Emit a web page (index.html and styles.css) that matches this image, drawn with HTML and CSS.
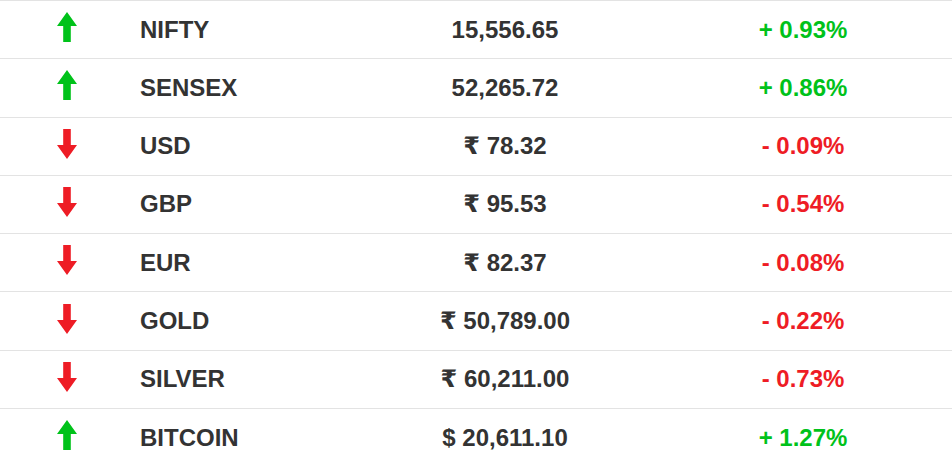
FILE: index.html
```html
<!DOCTYPE html>
<html>
<head>
<meta charset="utf-8">
<link rel="stylesheet" href="styles.css">
</head>
<body>
<div class="ticker">
  <div class="row">
    <div class="dir"><svg class="arrow up" viewBox="0 0 20 30" width="20" height="30"><path d="M10 0 L20 14 L13.8 14 L13.8 30 L6.2 30 L6.2 14 L0 14 Z"/></svg></div>
    <div class="name">NIFTY</div>
    <div class="value">15,556.65</div>
    <div class="change pos">+ 0.93%</div>
  </div>
  <div class="row">
    <div class="dir"><svg class="arrow up" viewBox="0 0 20 30" width="20" height="30"><path d="M10 0 L20 14 L13.8 14 L13.8 30 L6.2 30 L6.2 14 L0 14 Z"/></svg></div>
    <div class="name">SENSEX</div>
    <div class="value">52,265.72</div>
    <div class="change pos">+ 0.86%</div>
  </div>
  <div class="row">
    <div class="dir"><svg class="arrow down" viewBox="0 0 20 30" width="20" height="30"><path d="M10 30 L20 16 L13.8 16 L13.8 0 L6.2 0 L6.2 16 L0 16 Z"/></svg></div>
    <div class="name">USD</div>
    <div class="value">₹ 78.32</div>
    <div class="change neg">- 0.09%</div>
  </div>
  <div class="row">
    <div class="dir"><svg class="arrow down" viewBox="0 0 20 30" width="20" height="30"><path d="M10 30 L20 16 L13.8 16 L13.8 0 L6.2 0 L6.2 16 L0 16 Z"/></svg></div>
    <div class="name">GBP</div>
    <div class="value">₹ 95.53</div>
    <div class="change neg">- 0.54%</div>
  </div>
  <div class="row">
    <div class="dir"><svg class="arrow down" viewBox="0 0 20 30" width="20" height="30"><path d="M10 30 L20 16 L13.8 16 L13.8 0 L6.2 0 L6.2 16 L0 16 Z"/></svg></div>
    <div class="name">EUR</div>
    <div class="value">₹ 82.37</div>
    <div class="change neg">- 0.08%</div>
  </div>
  <div class="row">
    <div class="dir"><svg class="arrow down" viewBox="0 0 20 30" width="20" height="30"><path d="M10 30 L20 16 L13.8 16 L13.8 0 L6.2 0 L6.2 16 L0 16 Z"/></svg></div>
    <div class="name">GOLD</div>
    <div class="value">₹ 50,789.00</div>
    <div class="change neg">- 0.22%</div>
  </div>
  <div class="row">
    <div class="dir"><svg class="arrow down" viewBox="0 0 20 30" width="20" height="30"><path d="M10 30 L20 16 L13.8 16 L13.8 0 L6.2 0 L6.2 16 L0 16 Z"/></svg></div>
    <div class="name">SILVER</div>
    <div class="value">₹ 60,211.00</div>
    <div class="change neg">- 0.73%</div>
  </div>
  <div class="row">
    <div class="dir"><svg class="arrow up" viewBox="0 0 20 30" width="20" height="30"><path d="M10 0 L20 14 L13.8 14 L13.8 30 L6.2 30 L6.2 14 L0 14 Z"/></svg></div>
    <div class="name">BITCOIN</div>
    <div class="value">$ 20,611.10</div>
    <div class="change pos">+ 1.27%</div>
  </div>
</div>
</body>
</html>
```
FILE: styles.css
```css
html, body {
  margin: 0;
  padding: 0;
  background: #ffffff;
}
.ticker {
  font-family: "Liberation Sans", Arial, "DejaVu Sans", sans-serif;
  font-weight: bold;
  font-size: 24px;
  color: #333333;
}
.row {
  display: grid;
  grid-template-columns: 134px 222px 298px 298px;
  align-items: center;
  height: 58.29px;
  box-sizing: border-box;
  border-top: 1px solid #e3e3e3;
}
.dir {
  display: flex;
  justify-content: center;
  align-items: center;
  padding-bottom: 5px;
}
.arrow {
  display: block;
}
.arrow.up { fill: #00c21a; }
.arrow.down { fill: #ee1c25; }
.name {
  padding-left: 6px;
}
.value {
  text-align: center;
}
.change {
  text-align: center;
}
.change.pos { color: #00c21a; }
.change.neg { color: #ee1c25; }
```
